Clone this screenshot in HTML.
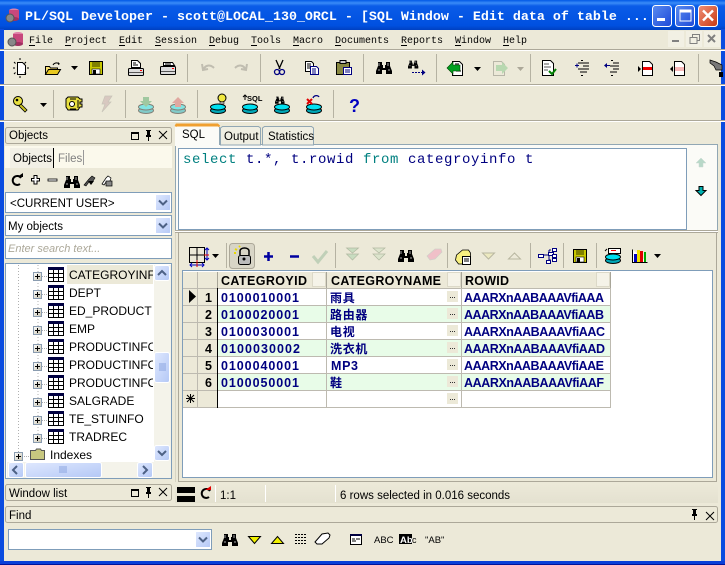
<!DOCTYPE html>
<html><head><meta charset="utf-8"><style>
html,body{margin:0;padding:0;width:725px;height:565px;overflow:hidden;background:#ece9d8}
svg{display:block}
text{font-family:"Liberation Sans","Noto Sans CJK SC",sans-serif;font-size:11.5px;fill:#000}
.ti{font-family:"Liberation Mono",monospace;font-weight:bold;font-size:13.33px;fill:#fff}
.m{font-family:"Liberation Mono",monospace;font-size:10px;fill:#000}
.tr{font-size:12px}
.g{font-size:12.5px;font-weight:bold;fill:#000080}
.h{font-size:12.5px;font-weight:bold;fill:#000}
.c{font-size:12px;font-weight:bold;fill:#000080;letter-spacing:.7px;font-family:"Noto Sans CJK SC",sans-serif}
.s{font-family:"Liberation Mono",monospace;font-size:14px;letter-spacing:.6px;fill:#000080}
.sk{font-family:"Liberation Mono",monospace;font-size:14px;letter-spacing:.6px;fill:#008080}
.ln{stroke:#aca899;fill:none}
.hi{stroke:#fff;fill:none}
.gl{stroke:#bdbab0;fill:none}
</style></head><body>
<svg width="725" height="565" viewBox="0 0 725 565" xmlns="http://www.w3.org/2000/svg">
<defs>
<linearGradient id="tb" x1="0" y1="0" x2="0" y2="1"><stop offset="0" stop-color="#0058e6"/><stop offset=".1" stop-color="#3a8cf8"/><stop offset=".2" stop-color="#0a5ce8"/><stop offset=".85" stop-color="#0050e0"/><stop offset="1" stop-color="#0040c0"/></linearGradient>
<linearGradient id="wb" x1="0" y1="0" x2="1" y2="1"><stop offset="0" stop-color="#5a8cf0"/><stop offset="1" stop-color="#1c48d8"/></linearGradient>
<linearGradient id="wc" x1="0" y1="0" x2="1" y2="1"><stop offset="0" stop-color="#f09078"/><stop offset="1" stop-color="#c83810"/></linearGradient>
<linearGradient id="sb" x1="0" y1="0" x2="1" y2="1"><stop offset="0" stop-color="#dfe8fe"/><stop offset="1" stop-color="#b4c8f6"/></linearGradient>
<linearGradient id="st" x1="0" y1="0" x2="0" y2="1"><stop offset="0" stop-color="#ece9d8"/><stop offset="1" stop-color="#e4e1d0"/></linearGradient>
<linearGradient id="expg" x1="0" y1="0" x2="1" y2="1"><stop offset="0" stop-color="#fff"/><stop offset="1" stop-color="#c8c4b0"/></linearGradient>
<clipPath id="treeclip"><rect x="7" y="265" width="146" height="197"/></clipPath>

<symbol id="tbl" width="17" height="16" viewBox="0 0 17 16" overflow="visible">
<rect x=".5" y=".5" width="15" height="14" fill="#fff" stroke="#000"/>
<rect x="0" y="0" width="16" height="3" fill="#000040"/>
<path d="M5.500 3v12M10.500 3v12M0 6.500h16M0 10.500h16" stroke="#000" fill="none"/>
</symbol>
<symbol id="exp" width="10" height="10" viewBox="0 0 10 10">
<rect x=".5" y=".5" width="8" height="8" fill="url(#expg)" stroke="#8a9cb0"/>
<path d="M2 4.500h5M4.500 2v5" stroke="#000" fill="none"/>
</symbol>
<symbol id="pm" width="16" height="16" viewBox="0 0 16 16">
<rect x=".5" y=".5" width="15" height="15" rx="2" fill="url(#sb)" stroke="#fff"/>
</symbol>
<symbol id="cb" width="16" height="17" viewBox="0 0 16 17">
<rect x=".5" y=".5" width="15" height="16" rx="1" fill="url(#sb)" stroke="#fff"/>
<path d="M4 6.500l4 4 4-4" stroke="#4d6185" stroke-width="2" fill="none"/>
</symbol>
<symbol id="bin" width="16" height="14" viewBox="0 0 16 14">
<path d="M2 1h4v3h1v3h2V4h1V1h4v4l2 5v3H10V9H6v4H0v-3l2-5z" fill="#000"/>
<path d="M3 2v3M12 2v3M2 9h2M12 9h2" stroke="#aaa" fill="none"/>
</symbol>
<symbol id="dn" width="9" height="5" viewBox="0 0 9 5"><path d="M0 0h7L3.500 4z" fill="#000"/></symbol>
<symbol id="dng" width="9" height="5" viewBox="0 0 9 5"><path d="M0 0h7L3.500 4z" fill="#aca899"/></symbol>
<symbol id="db" width="16" height="12" viewBox="0 0 16 12">
<ellipse cx="8" cy="8.500" rx="7.500" ry="3" fill="#00a8b8" stroke="#000"/>
<ellipse cx="8" cy="5" rx="7.500" ry="3" fill="#00e0f0" stroke="#000"/>
</symbol>
<symbol id="dots" width="11" height="11" viewBox="0 0 11 11">
<rect width="11" height="11" fill="#ece9d8"/>
<path d="M3 6.500h1M5 6.500h1M7 6.500h1" stroke="#333"/>
</symbol>
<symbol id="cap" width="42" height="14" viewBox="0 0 42 14">
<rect x="1.500" y="3.500" width="7" height="7" fill="none" stroke="#000"/><path d="M1 4.500h8" stroke="#000"/>
<path d="M16 1h5v1h-1v4h1v2h-2v4h-1V8h-2V6h1V2h-1z" fill="#000"/>
<path d="M29 2l8 8M37 2l-8 8" stroke="#000" fill="none"/>
</symbol>
</defs>

<!-- frame -->
<rect width="725" height="565" fill="#ece9d8"/>
<rect width="725" height="30" fill="url(#tb)"/>
<rect x="0" y="29" width="4" height="536" fill="#0a4ce0"/>
<rect x="721" y="29" width="4" height="536" fill="#0a4ce0"/>
<rect x="0" y="561" width="725" height="4" fill="#0a3fd8"/>
<rect x="0" y="564" width="725" height="1" fill="#00139c"/>

<!-- title bar -->
<g>
<ellipse cx="14" cy="10.500" rx="5" ry="2" fill="#e080a8"/><rect x="9" y="10" width="10" height="9" fill="#c8487c"/><ellipse cx="14" cy="19" rx="5" ry="2" fill="#a03060"/>
<circle cx="10" cy="18" r="4" fill="#888" stroke="#555"/>
</g>
<text class="ti" x="25" y="20" xml:space="preserve">PL/SQL Developer - scott@LOCAL_130_ORCL - [SQL Window - Edit data of table ...</text>
<rect x="652.500" y="5.500" width="19" height="21" rx="3" fill="url(#wb)" stroke="#fff"/>
<rect x="657" y="18" width="8" height="3" fill="#fff"/>
<rect x="675.500" y="5.500" width="19" height="21" rx="3" fill="url(#wb)" stroke="#fff"/>
<rect x="680" y="10" width="11" height="11" fill="none" stroke="#fff"/><rect x="680" y="10" width="11" height="2.500" fill="#fff"/>
<rect x="698.500" y="5.500" width="19" height="21" rx="3" fill="url(#wc)" stroke="#fff"/>
<path d="M703 10.500l10 10M713 10.500l-10 10" stroke="#fff" stroke-width="2.400" fill="none"/>

<!-- menu -->
<g>
<ellipse cx="18" cy="34" rx="5" ry="2" fill="#e080a8"/><rect x="13" y="34" width="10" height="10" fill="#c8487c"/><ellipse cx="18" cy="44" rx="5" ry="2" fill="#a03060"/>
<circle cx="12" cy="42" r="4" fill="#888" stroke="#555"/>
</g>
<g>
<text class="m" x="29" y="43">File</text><path d="M29 45.500h6" stroke="#000"/>
<text class="m" x="65" y="43">Project</text><path d="M65 45.500h6" stroke="#000"/>
<text class="m" x="119" y="43">Edit</text><path d="M119 45.500h6" stroke="#000"/>
<text class="m" x="155" y="43">Session</text><path d="M155 45.500h6" stroke="#000"/>
<text class="m" x="209" y="43">Debug</text><path d="M209 45.500h6" stroke="#000"/>
<text class="m" x="251" y="43">Tools</text><path d="M251 45.500h6" stroke="#000"/>
<text class="m" x="293" y="43">Macro</text><path d="M293 45.500h6" stroke="#000"/>
<text class="m" x="335" y="43">Documents</text><path d="M335 45.500h6" stroke="#000"/>
<text class="m" x="401" y="43">Reports</text><path d="M401 45.500h6" stroke="#000"/>
<text class="m" x="455" y="43">Window</text><path d="M455 45.500h6" stroke="#000"/>
<text class="m" x="503" y="43">Help</text><path d="M503 45.500h6" stroke="#000"/>
</g>
<rect x="668" y="31" width="16" height="16" fill="#f2f0e4"/><rect x="686" y="31" width="16" height="16" fill="#f2f0e4"/><rect x="704" y="31" width="16" height="16" fill="#f2f0e4"/>
<path d="M672 41h7" stroke="#808080" stroke-width="2"/>
<path d="M690 37.500h7v6h-7zM692.500 37v-2.500h7v6h-2.500" stroke="#808080" fill="none"/>
<path d="M708 35l7 7M715 35l-7 7" stroke="#808080" stroke-width="2" fill="none"/>

<!-- toolbar lines -->
<path d="M0 49.500h725M0 84.500h725M0 120.500h725" stroke="#aca899"/>
<path d="M0 50.500h725M0 85.500h725M0 121.500h725" stroke="#fff"/>
<path d="M116.500 54v28M187.500 54v28M260.500 54v28M363.500 54v28M436.500 54v28M530.500 54v28M698.500 54v28M53.500 90v28M125.500 90v28M197.500 90v28M333.500 90v28" stroke="#b5b2a2"/>

<!-- toolbar 1 icons -->
<path d="M17.500 62.500h5l3 3v9h-8z" fill="#fff" stroke="#000"/>
<path d="M20 58v2M20 76v2M13 68h2M27 68h2M14 62l1.500 1.500M26 62l-1.500 1.500M14 74l1.500-1.500M26 74l-1.500-1.500" stroke="#000"/>
<path d="M45.500 74.500v-8h4l1 1.500h7v6.500z" fill="#f8e070" stroke="#000"/>
<path d="M45.500 74.500l3-5h12l-3 5z" fill="#e8c820" stroke="#000"/>
<path d="M53 65c1-2 4-3 6-1" stroke="#000" fill="none"/><path d="M58 62l2 2-2 1z" fill="#000"/>
<use href="#dn" x="71" y="66"/>
<rect x="89.500" y="61.500" width="13" height="13" fill="#c8c800" stroke="#000"/>
<rect x="92" y="62" width="8" height="5" fill="#808000"/><rect x="92" y="69" width="8" height="5" fill="#fff" stroke="#000" stroke-width=".6"/><rect x="93" y="70" width="3" height="4" fill="#000"/>
<g id="pr">
<path d="M131.500 60.500h6l3 3v4h-9z" fill="#fff" stroke="#000"/><path d="M133 63h3M133 65h5" stroke="#000"/>
<rect x="128.500" y="68.500" width="15" height="7" rx="1" fill="#ddd" stroke="#000"/><path d="M129 72.500h14" stroke="#555"/><rect x="140" y="70" width="2" height="1" fill="#f00"/>
</g>
<path d="M163.500 62.500h9l2 3h-11z" fill="#fff" stroke="#000"/><path d="M165 64h6" stroke="#000"/>
<rect x="160.500" y="66.500" width="15" height="8" rx="1" fill="#ddd" stroke="#000"/><path d="M161 71.500h14" stroke="#555"/><rect x="172" y="68" width="2" height="1" fill="#f00"/>
<path d="M204 70c0-4 5-6 9-3l1 1M202 64l1 6 5-1" stroke="#c0bdb0" stroke-width="2" fill="none"/>
<path d="M245 70c0-4-5-6-9-3l-1 1M247 64l-1 6-5-1" stroke="#c0bdb0" stroke-width="2" fill="none"/>
<path d="M276 60l4 9M283 60l-4 9" stroke="#000" fill="none" stroke-width="1.300"/>
<circle cx="277" cy="72" r="2.500" fill="none" stroke="#000080" stroke-width="1.300"/><circle cx="282" cy="72" r="2.500" fill="none" stroke="#000080" stroke-width="1.300"/>
<path d="M305.500 61.500h6l2 2v8h-8z" fill="#fff" stroke="#000"/><path d="M307 64h4M307 66h4M307 68h4" stroke="#000"/>
<path d="M310.500 66.500h6l2 2v6h-8z" fill="#fff" stroke="#000080"/><path d="M312 69h4M312 71h4M312 73h4" stroke="#000080"/>
<rect x="336.500" y="62.500" width="13" height="12" fill="#888840" stroke="#000"/><rect x="340" y="60.500" width="6" height="3" fill="#ccc" stroke="#000"/>
<rect x="343.500" y="67.500" width="8" height="7" fill="#fff" stroke="#000080"/><path d="M345 70h5M345 72h5" stroke="#000080"/>
<use href="#bin" x="376" y="61"/>
<g transform="translate(408,60) scale(.65)"><use href="#bin" x="0" y="0"/></g>
<path d="M412 72.500h2M415 72.500h2M418 72.500h2" stroke="#000080"/><path d="M421 72.500h4" stroke="#000080"/><path d="M422 69.500l3.500 3-3.500 3z" fill="#000080"/>
<path d="M452.500 61.500h7l3 3v11h-10z" fill="#fff" stroke="#000"/><path d="M455 64h4M456 71h5" stroke="#000"/>
<path d="M447 68l6-6v3h7v6h-7v3z" fill="#00a020" stroke="#004000" stroke-width=".6"/>
<use href="#dn" x="474" y="67"/>
<path d="M493.500 61.500h8l3 3v11h-11z" fill="#ece9d8" stroke="#b8b6a8"/>
<path d="M508 68l-6-6v3h-6v6h6v3z" fill="#b8d8b0"/>
<use href="#dng" x="517" y="67"/>
<path d="M542.500 60.500h8l3 3v12h-11z" fill="#fff" stroke="#000"/><path d="M544 64h5M544 67h7M544 70h4" stroke="#555"/>
<path d="M549 71l3 3 4-5" stroke="#008000" stroke-width="2" fill="none"/>
<path d="M578 63h11M583 66h6M578 69h11M580 72h7M581 60.500h2M581 75.500h2" stroke="#000" fill="none"/>
<path d="M575 65.500h4M577 63.500v4" stroke="#000080"/>
<path d="M613 63h6M610 66h9M613 69h6M610 72h7M611 60.500h2M611 75.500h2" stroke="#000" fill="none"/>
<path d="M606 65.500h4" stroke="#000080"/><path d="M607 63l-3 2.500 3 2.500z" fill="#000080"/>
<path d="M642.500 61.500h7l3 3v11h-10z" fill="#fff" stroke="#000"/><rect x="643" y="67" width="9" height="3" fill="#f00000"/>
<path d="M638 66l3 3-3 3z" fill="#000"/>
<path d="M674.500 61.500h7l3 3v11h-10z" fill="#fff" stroke="#000"/><rect x="675" y="67" width="9" height="4" fill="#f8b8b8"/>
<path d="M673 66l-3 3 3 3z" fill="#000"/>
<path d="M710 60l6 2 6 3v5h-6l-2-4-4-3z" fill="#777" stroke="#000" stroke-width=".7"/><rect x="719" y="72" width="4" height="5" fill="#000"/>

<!-- toolbar 2 icons -->
<circle cx="18" cy="101" r="4.500" fill="#e8e040" stroke="#000"/><circle cx="17" cy="100" r="1.300" fill="#000"/>
<path d="M21 104l6 6-2 2-6-6z" fill="#c8c020" stroke="#000" stroke-width=".8"/>
<use href="#dn" x="40" y="103"/>
<path d="M68 97h10l2 2h2v3h-2v2h2v3h-2l-2 3h-10l-2-3v-8z" fill="#e8e040" stroke="#000"/>
<circle cx="72" cy="104" r="2.500" fill="#fff" stroke="#000"/><path d="M70 99h6M70 109h6M78 100v8" stroke="#000"/>
<path d="M108 96l4 0-4 6h3l-9 10 3-8h-3l3-8z" fill="#d8c8c0" stroke="#c8c4b8" stroke-width=".7"/>
<g opacity=".45"><use href="#db" x="138" y="102"/></g>
<path d="M143 97h6v4h3l-6 6-6-6h3z" fill="#a0c8a0"/>
<g opacity=".45"><use href="#db" x="170" y="102"/></g>
<path d="M175 107h6v-4h3l-6-6-6 6h3z" fill="#e0a8a0"/>
<use href="#db" x="210" y="102"/><circle cx="222" cy="98" r="4" fill="#f0e840" stroke="#000"/><path d="M220 102h4v2h-4z" fill="#ccc" stroke="#000" stroke-width=".5"/>
<use href="#db" x="242" y="102"/><text x="247" y="101" style="font-size:7.500px;font-weight:bold">SQL</text><path d="M243 97l2-2 2 2M245 95v5" stroke="#000" fill="none"/>
<use href="#db" x="274" y="102"/><g transform="translate(275,96) scale(.6)"><use href="#bin" x="0" y="0"/></g>
<use href="#db" x="306" y="102"/><path d="M307 99l5 5M312 99l-5 5" stroke="#e00000" stroke-width="2"/><path d="M313 98c1-3 5-3 6-1" stroke="#000080" stroke-width="1.300" fill="none"/>
<text x="349" y="112" style="font-size:18px;font-weight:bold;fill:#0000c0">?</text>

<!-- Objects panel -->
<rect x="5.500" y="127.500" width="166" height="16" rx="2" fill="#ece9d8" stroke="#aca899"/>
<text x="9" y="139">Objects</text>
<use href="#cap" x="130" y="129"/>
<rect x="5" y="146" width="167" height="22" fill="#fbf9ec"/>
<rect x="10" y="148" width="43" height="20" fill="#f2f0e6"/>
<path d="M53.500 148v20" stroke="#000"/>
<path d="M83.500 150v15" stroke="#999"/>
<text x="13" y="162">Objects</text>
<text x="58" y="162" style="fill:#808080">Files</text>
<path d="M21 178a4.500 4.500 0 1 0 -1 6" stroke="#000" stroke-width="2" fill="none"/><path d="M17 177h6v-4z" fill="#000"/>
<path d="M31.500 178.500h2.500v-3h3v3h2.500v2.500h-2.500v3h-3v-3h-2.500z" fill="#fff" stroke="#000"/>
<rect x="48" y="179" width="9" height="2" fill="#fff" stroke="#000" stroke-width=".8"/>
<use href="#bin" x="64" y="175"/>
<path d="M84 185l5-6 3-3 3 2-2 3-4 1-3 4z" fill="#555" stroke="#000" stroke-width=".6"/><path d="M88 181h6l-3 4z" fill="#000"/>
<path d="M102 184l4-6 2-2 3 2-1 3-4 1-2 3z" fill="#fff" stroke="#000" stroke-width=".7"/><rect x="106" y="181" width="6" height="5" fill="#888" stroke="#000" stroke-width=".7"/>

<rect x="5.500" y="192.500" width="166" height="20" fill="#fff" stroke="#7f9db9"/>
<text x="10" y="207">&lt;CURRENT USER&gt;</text>
<use href="#cb" x="155" y="194"/>
<rect x="5.500" y="215.500" width="166" height="20" fill="#fff" stroke="#7f9db9"/>
<text x="8" y="230">My objects</text>
<use href="#cb" x="155" y="217"/>
<rect x="5.500" y="238.500" width="166" height="20" fill="#fff" stroke="#7f9db9"/>
<text x="8" y="252" style="font-size:11px;font-style:italic;fill:#aca899">Enter search text...</text>

<!-- tree -->
<rect x="5.500" y="263.500" width="166" height="215" fill="#fff" stroke="#7f9db9"/>
<rect x="67" y="265" width="86" height="19" fill="#ece9d8"/>
<path d="M18.500 265v190M38 265v173" stroke="#b0b0b0" stroke-dasharray="1 2" fill="none"/>
<path d="M42 276.500h6M42 294.500h6M42 312.500h6M42 330.500h6M42 348.500h6M42 366.500h6M42 384.500h6M42 402.500h6M42 420.500h6M42 438.500h6M24 456.500h6" stroke="#b0b0b0" stroke-dasharray="1 1" fill="none"/>
<g clip-path="url(#treeclip)">
<use href="#exp" x="33" y="272"/><use href="#tbl" x="48" y="267"/><text class="tr" x="69" y="279">CATEGROYINFO</text>
<use href="#exp" x="33" y="290"/><use href="#tbl" x="48" y="285"/><text class="tr" x="69" y="297">DEPT</text>
<use href="#exp" x="33" y="308"/><use href="#tbl" x="48" y="303"/><text class="tr" x="69" y="315">ED_PRODUCT</text>
<use href="#exp" x="33" y="326"/><use href="#tbl" x="48" y="321"/><text class="tr" x="69" y="333">EMP</text>
<use href="#exp" x="33" y="344"/><use href="#tbl" x="48" y="339"/><text class="tr" x="69" y="351">PRODUCTINFO</text>
<use href="#exp" x="33" y="362"/><use href="#tbl" x="48" y="357"/><text class="tr" x="69" y="369">PRODUCTINFO</text>
<use href="#exp" x="33" y="380"/><use href="#tbl" x="48" y="375"/><text class="tr" x="69" y="387">PRODUCTINFO</text>
<use href="#exp" x="33" y="398"/><use href="#tbl" x="48" y="393"/><text class="tr" x="69" y="405">SALGRADE</text>
<use href="#exp" x="33" y="416"/><use href="#tbl" x="48" y="411"/><text class="tr" x="69" y="423">TE_STUINFO</text>
<use href="#exp" x="33" y="434"/><use href="#tbl" x="48" y="429"/><text class="tr" x="69" y="441">TRADREC</text>
<use href="#exp" x="14" y="452"/>
<path d="M30.500 459.500v-9h5l1-1.500h4l1 1.500h3v9z" fill="#c8c880" stroke="#555"/>
<text class="tr" x="50" y="459">Indexes</text>
</g>
<!-- v scrollbar -->
<rect x="154" y="265" width="17" height="197" fill="#f4f3ea"/>
<use href="#pm" x="154" y="265"/><path d="M158 275l4-4 4 4" stroke="#4d6185" stroke-width="2" fill="none"/>
<rect x="154.500" y="352.500" width="15" height="30" rx="2" fill="url(#sb)" stroke="#fff"/>
<path d="M159 364h7M159 366h7M159 368h7M159 370h7" stroke="#8aa4e0"/>
<use href="#pm" x="154" y="445"/><path d="M158 451l4 4 4-4" stroke="#4d6185" stroke-width="2" fill="none"/>
<!-- h scrollbar -->
<rect x="7" y="462" width="164" height="16" fill="#f4f3ea"/>
<use href="#pm" x="8" y="462"/><path d="M17 466l-4 4 4 4" stroke="#4d6185" stroke-width="2" fill="none"/>
<rect x="25.500" y="462.500" width="76" height="15" rx="2" fill="url(#sb)" stroke="#fff"/>
<path d="M60 466v7M62 466v7M64 466v7M66 466v7" stroke="#8aa4e0"/>
<use href="#pm" x="137" y="462"/><path d="M143 466l4 4-4 4" stroke="#4d6185" stroke-width="2" fill="none"/>

<!-- Window list / Find -->
<rect x="5.500" y="484.500" width="166" height="16" rx="2" fill="#ece9d8" stroke="#aca899"/>
<text x="9" y="497">Window list</text>
<use href="#cap" x="130" y="486"/>
<rect x="5.500" y="506.500" width="712" height="16" rx="2" fill="#ece9d8" stroke="#aca899"/>
<text x="9" y="519">Find</text>
<path d="M692 509h5v1h-1v4h1v2h-2v4h-1v-4h-2v-2h1v-4h-1z" fill="#000"/>
<path d="M706 512l8 8M714 512l-8 8" stroke="#000" fill="none"/>
<rect x="8.500" y="529.500" width="203" height="20" fill="#fff" stroke="#7f9db9"/>
<use href="#cb" x="195" y="531"/>
<use href="#bin" x="222" y="533"/>
<path d="M248.500 536.500h12l-6 7z" fill="#f0f000" stroke="#000"/>
<path d="M271.500 543.500h12l-6-7z" fill="#f0f000" stroke="#000"/>
<path d="M295 534.500h12M295 537.500h12M295 540.500h12M295 543.500h12" stroke="#000" stroke-dasharray="2 1"/>
<path d="M317 544l-2-2 7-8 6-1 2 2-1 3-7 6z" fill="#fff" stroke="#000"/>
<rect x="350.500" y="534.500" width="11" height="10" fill="#fff" stroke="#000"/><rect x="350" y="534" width="12" height="2" fill="#000040"/><path d="M352 539h3M356 539h4M352 541h4" stroke="#000"/>
<text x="374" y="543" style="font-size:9.500px">ABC</text>
<rect x="399" y="534" width="13" height="10" fill="#000"/>
<text x="400" y="543" style="font-size:9.500px;fill:#fff;font-weight:bold">Ab</text><text x="412" y="543" style="font-size:9px">c</text>
<text x="425" y="543" style="font-size:9.500px">"AB"</text>

<!-- Right: tabs -->
<rect x="175.500" y="144.500" width="542" height="87" fill="#fbfbf7" stroke="#91a7b4"/>
<path d="M220.500 145v-17l2-1.500h36l2 1.500v17z" fill="#efeee2" stroke="#91a7b4"/>
<path d="M262.500 145v-17l2-1.500h47l2 1.500v17z" fill="#efeee2" stroke="#91a7b4"/>
<rect x="175" y="126" width="44" height="20" fill="#fbfbf7"/>
<path d="M219.500 145v-18" stroke="#91a7b4"/>
<path d="M175.500 126.500l1-2h41l2 2" fill="#f0a030" stroke="#f0a030" stroke-width="2"/>
<text x="182" y="138">SQL</text>
<text x="224" y="140">Output</text>
<text x="268" y="140">Statistics</text>
<rect x="178.500" y="148.500" width="508" height="81" fill="#fff" stroke="#7f9db9"/>
<text class="sk" x="183" y="163">select</text>
<text class="s" x="246" y="163" xml:space="preserve">t.*, t.rowid</text>
<text class="sk" x="363" y="163">from</text>
<text class="s" x="408" y="163">categroyinfo t</text>
<path d="M701 158l5 5h-3v4h-4v-4h-3z" fill="#b8d8c8" stroke="#c8d8d0" stroke-width=".5"/>
<path d="M701 195.500l5-5h-3v-4h-4v4h-3z" fill="#00b0b0" stroke="#000"/>

<!-- lower panel -->
<path d="M175 230.500h543" stroke="#aca899"/><path d="M175 232.500h543" stroke="#aca899"/>
<rect x="175" y="231" width="543" height="1" fill="#fff"/>
<rect x="175" y="233" width="542" height="249" fill="#ece9d8"/>
<path d="M178.500 233v248.500h538" stroke="#aca899" fill="none"/>
<path d="M716.500 233v249" stroke="#aca899"/>
<path d="M175.500 233v249" stroke="#d8d5c4"/>

<!-- grid toolbar -->
<rect x="189.500" y="247.500" width="15" height="15" fill="#ece9d8" stroke="#000"/>
<path d="M197 248v14M190 255h14" stroke="#000"/>
<path d="M207 248v12M205 250l2-2 2 2M205 258l2 2 2-2M190 265h14M192 263l-2 2 2 2M202 263l2 2-2 2" stroke="#0000c0" fill="none"/>
<path d="M197 260v7M204 255h5" stroke="#e00000"/>
<use href="#dn" x="212" y="254"/>
<path d="M226.500 243v25M335.500 243v25M447.500 243v25M530.500 243v25M563.500 243v25M596.500 243v25" stroke="#b5b2a2"/>
<rect x="229.500" y="243.500" width="25" height="25" rx="3" fill="#d8d5c6" stroke="#aca899"/>
<rect x="238.500" y="255.500" width="12" height="9" rx="2" fill="#bbb" stroke="#000"/>
<path d="M240 255v-4c0-4 9-4 9 0v4" stroke="#000" stroke-width="1.500" fill="none"/>
<circle cx="244" cy="259" r="1.500" fill="#000"/>
<path d="M235 249l2 1M236 253h-2M240 246l-1 1" stroke="#e8d800" stroke-width="2"/>
<path d="M264 256.500h9M268.500 252v9" stroke="#0000a0" stroke-width="2.500"/>
<path d="M290 256.500h9" stroke="#0000a0" stroke-width="2.500"/>
<path d="M313 256l5 6 9-11" stroke="#c0d0b8" stroke-width="3" fill="none"/>
<path d="M346.500 248h12l-6 5zM346.500 254h12l-6 6z" fill="#c8dcc0" stroke="#b0b8a0" stroke-width=".7"/>
<path d="M373 248h12l-6 5zM373 254h12l-6 6z" fill="#dce4cc" stroke="#b0b8a0" stroke-width=".7"/>
<use href="#bin" x="398" y="249"/>
<path d="M427 256l8-7 6 0 1 3-7 7-5 1z" fill="#f0c0c8" stroke="#d0d0c8" stroke-width=".7"/>
<path d="M456.500 255l6-5h6l2 3v11h-12l-3-4z" fill="#f8f080" stroke="#000" stroke-width=".8"/><rect x="462.500" y="256.500" width="8" height="8" fill="#fff" stroke="#000"/><path d="M464 259h5M464 261h5" stroke="#000"/>
<path d="M482.500 253h12l-6 6z" fill="#ece9c0" stroke="#b8b6a0"/>
<path d="M508.500 259h12l-6-6z" fill="#ece9d8" stroke="#b8b6a0"/>
<path d="M543 255h6M549 250v10M549 250h2M549 260h2M549 255h2" stroke="#000080" fill="none"/>
<rect x="538.500" y="254.500" width="5" height="3" fill="#fff" stroke="#000080"/>
<rect x="548.500" y="252.500" width="5" height="3" fill="#fff" stroke="#000080"/>
<rect x="552.500" y="248.500" width="4" height="3" fill="#fff" stroke="#000080"/><rect x="552.500" y="254.500" width="4" height="3" fill="#fff" stroke="#000080"/><rect x="552.500" y="258.500" width="4" height="3" fill="#fff" stroke="#000080"/><rect x="546.500" y="260.500" width="4" height="3" fill="#fff" stroke="#000080"/>
<rect x="573.500" y="249.500" width="13" height="13" fill="#c8c800" stroke="#000"/><rect x="576" y="250" width="8" height="5" fill="#808000"/><rect x="576" y="257" width="8" height="5" fill="#fff" stroke="#000" stroke-width=".6"/><rect x="577" y="258" width="3" height="4" fill="#000"/>
<use href="#db" x="605" y="252"/><rect x="608.500" y="248.500" width="12" height="5" fill="#fff" stroke="#000"/><rect x="611" y="250" width="5" height="1" fill="#f00"/><path d="M605 251l2-2" stroke="#000"/>
<path d="M632.500 249.500v13h15" stroke="#000" fill="#fff"/>
<rect x="634" y="254" width="3" height="8" fill="#0000c0"/><rect x="637" y="250" width="3" height="12" fill="#f0e000"/><rect x="640" y="251" width="3" height="11" fill="#e00000"/><rect x="644" y="252" width="2" height="10" fill="#0a0"/>
<use href="#dn" x="654" y="254"/>

<!-- grid -->
<rect x="182.500" y="270.500" width="530" height="207" fill="#fff" stroke="#7f9db9"/>
<rect x="183" y="272" width="428" height="16" fill="#ece9d8"/>
<rect x="183" y="288" width="34" height="119" fill="#ece9d8"/>
<rect x="218" y="305" width="393" height="17" fill="#e8fce8"/>
<rect x="218" y="339" width="393" height="17" fill="#e8fce8"/>
<rect x="218" y="373" width="393" height="17" fill="#e8fce8"/>
<path d="M183 288.500h428M183 305.500h428M183 322.500h428M183 339.500h428M183 356.500h428M183 373.500h428M183 390.500h428M183 407.500h428" class="gl"/>
<path d="M197.500 272v135M326.500 288v119M461.500 288v119M610.500 288v119" class="gl"/>
<path d="M217.500 272v16M326.500 272v16M461.500 272v16M610.500 272v16" stroke="#a8a598"/>
<path d="M217.500 288v120" stroke="#000"/>
<rect x="312.500" y="272.500" width="13" height="14" fill="#f5f3e8" stroke="#dcd9c8"/>
<rect x="447.500" y="272.500" width="13" height="14" fill="#f5f3e8" stroke="#dcd9c8"/>
<rect x="596.500" y="272.500" width="13" height="14" fill="#f5f3e8" stroke="#dcd9c8"/>
<text class="h" x="221" y="285" textLength="86" lengthAdjust="spacing">CATEGROYID</text>
<text class="h" x="331" y="285" textLength="110" lengthAdjust="spacing">CATEGROYNAME</text>
<text class="h" x="465" y="285" textLength="44" lengthAdjust="spacing">ROWID</text>
<path d="M189 290l7 6.500-7 6.500z" fill="#000"/>
<text class="h" x="205" y="302">1</text><text class="h" x="205" y="319">2</text><text class="h" x="205" y="336">3</text><text class="h" x="205" y="353">4</text><text class="h" x="205" y="370">5</text><text class="h" x="205" y="387">6</text>
<path d="M186 398.500h9M190.500 394v9M187 395l7 7M194 395l-7 7" stroke="#000" fill="none"/>
<text class="g" x="221" y="302" textLength="78" lengthAdjust="spacing">0100010001</text>
<text class="g" x="221" y="319" textLength="78" lengthAdjust="spacing">0100020001</text>
<text class="g" x="221" y="336" textLength="78" lengthAdjust="spacing">0100030001</text>
<text class="g" x="221" y="353" textLength="79" lengthAdjust="spacing">0100030002</text>
<text class="g" x="221" y="370" textLength="78" lengthAdjust="spacing">0100040001</text>
<text class="g" x="221" y="387" textLength="78" lengthAdjust="spacing">0100050001</text>
<text class="c" x="330" y="302">雨具</text>
<text class="c" x="330" y="319">路由器</text>
<text class="c" x="330" y="336">电视</text>
<text class="c" x="330" y="353">洗衣机</text>
<text class="g" x="331" y="370" textLength="27" lengthAdjust="spacing">MP3</text>
<text class="c" x="330" y="387">鞋</text>
<use href="#dots" x="447" y="291"/><use href="#dots" x="447" y="308"/><use href="#dots" x="447" y="325"/><use href="#dots" x="447" y="342"/><use href="#dots" x="447" y="359"/><use href="#dots" x="447" y="376"/><use href="#dots" x="447" y="393"/>
<text class="g" x="464" y="302" textLength="140" lengthAdjust="spacing">AAARXnAABAAAVfiAAA</text>
<text class="g" x="464" y="319" textLength="140" lengthAdjust="spacing">AAARXnAABAAAVfiAAB</text>
<text class="g" x="464" y="336" textLength="141" lengthAdjust="spacing">AAARXnAABAAAVfiAAC</text>
<text class="g" x="464" y="353" textLength="141" lengthAdjust="spacing">AAARXnAABAAAVfiAAD</text>
<text class="g" x="464" y="370" textLength="140" lengthAdjust="spacing">AAARXnAABAAAVfiAAE</text>
<text class="g" x="464" y="387" textLength="140" lengthAdjust="spacing">AAARXnAABAAAVfiAAF</text>

<!-- status -->
<rect x="175" y="484" width="543" height="19" fill="url(#st)"/>
<rect x="177" y="487" width="18" height="6" fill="#000"/><rect x="177" y="496" width="18" height="6" fill="#000"/>
<path d="M210 491a4.500 4.500 0 1 0 -1 6" stroke="#000" stroke-width="2" fill="none"/><path d="M205 490h6v-4z" fill="#e00000"/>
<path d="M215.500 485v17M265.500 485v17M335.500 485v17" stroke="#fff"/>
<text x="220" y="499">1:1</text>
<text x="340" y="499">6 rows selected in 0.016 seconds</text>
</svg>
</body></html>
